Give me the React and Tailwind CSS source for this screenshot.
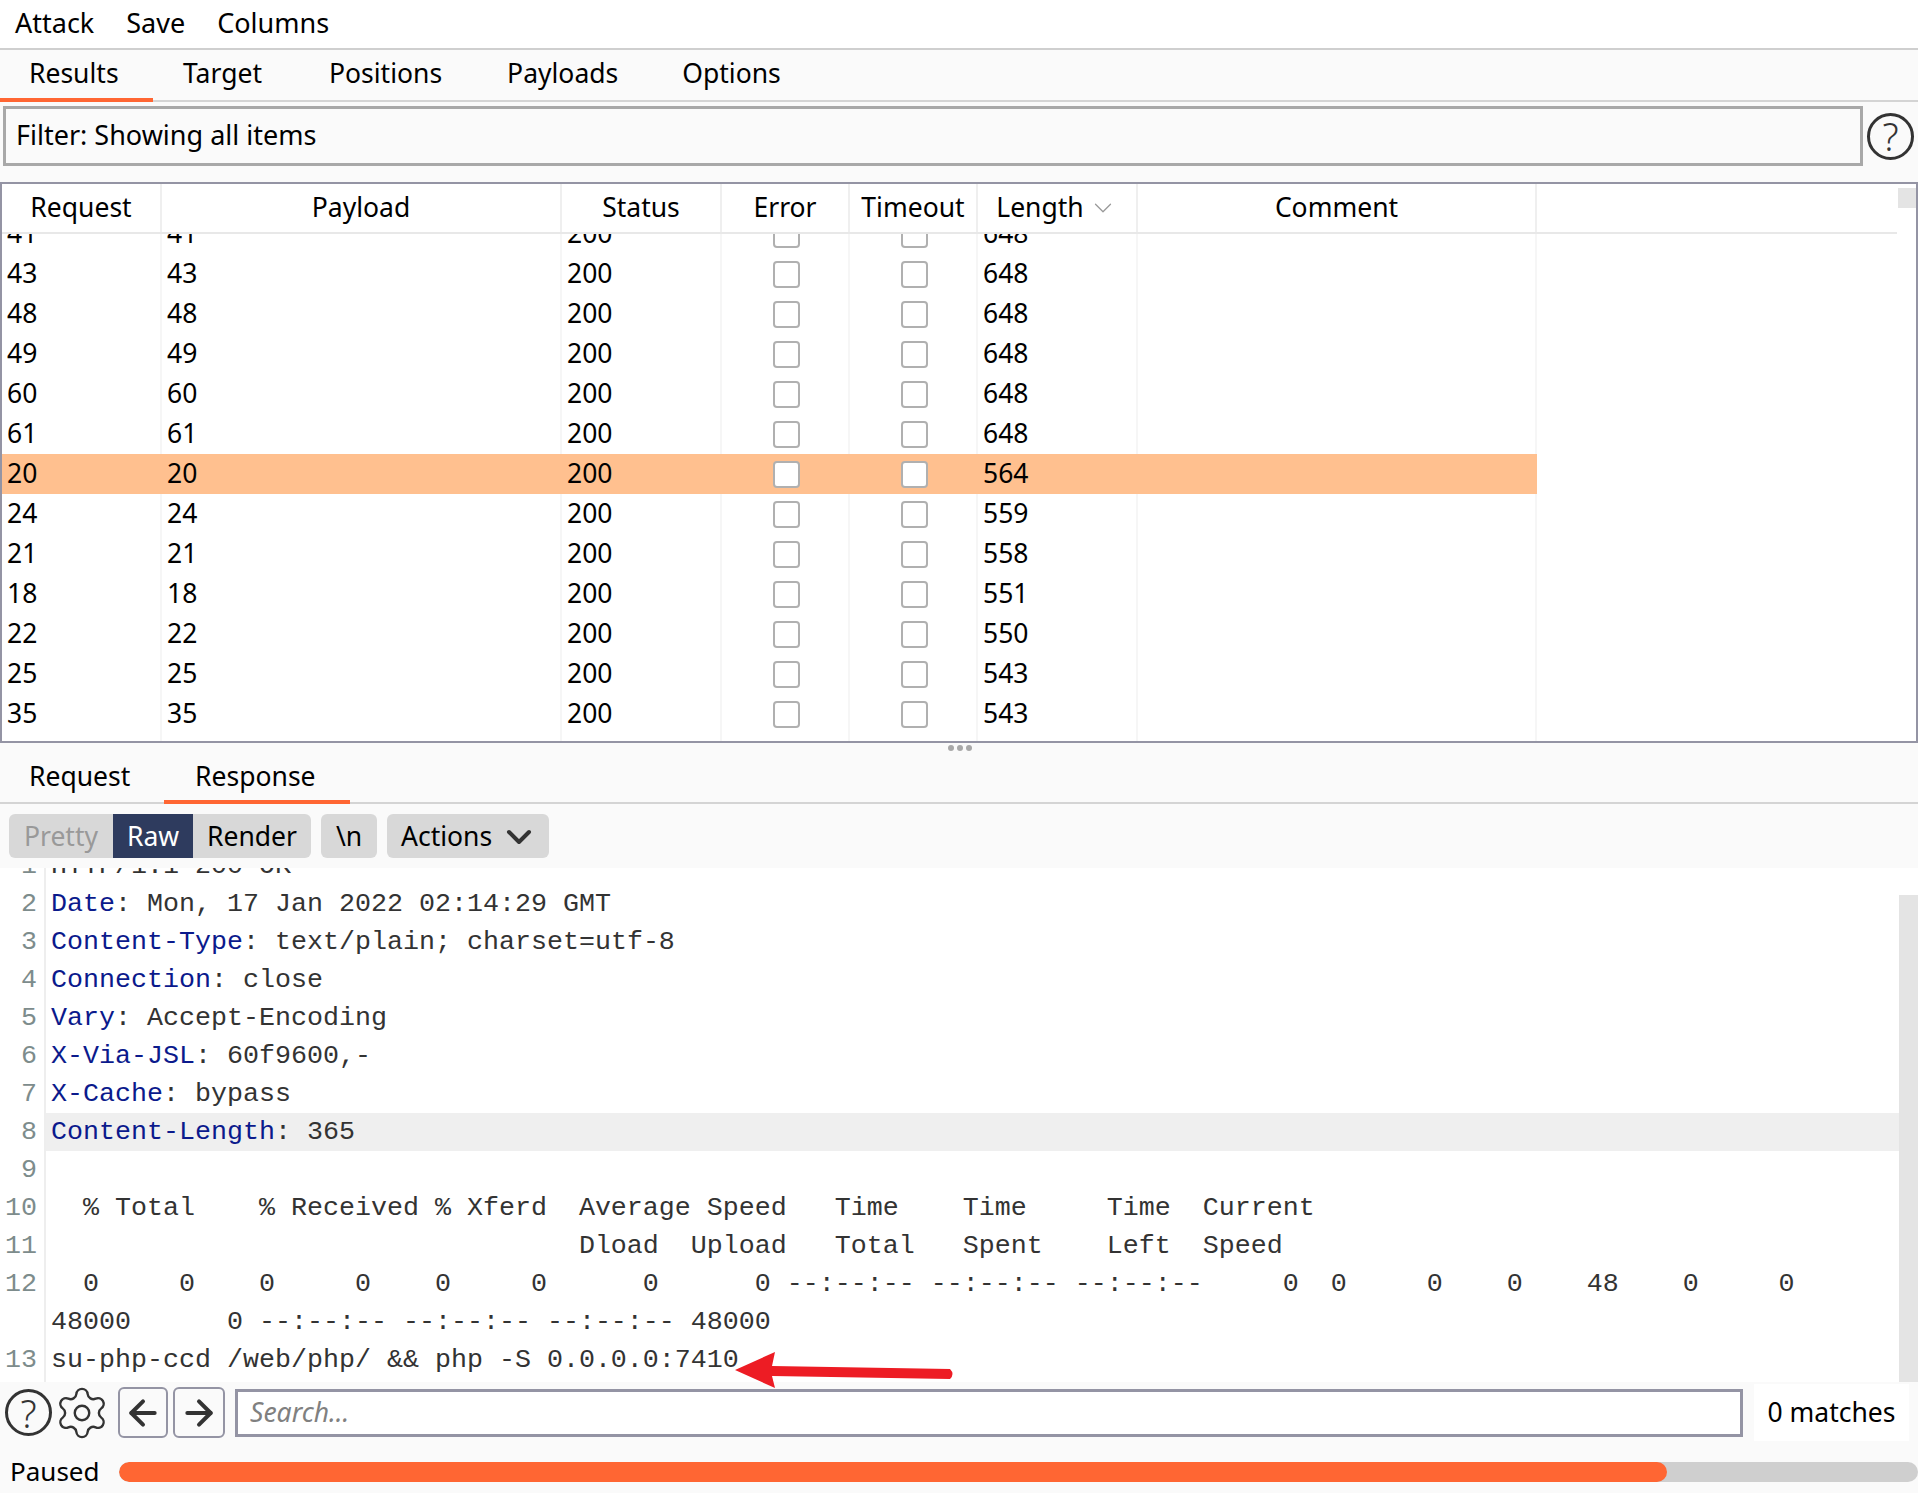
import { ArrowLeft, ArrowRight, ChevronDown, Settings } from 'lucide-react';

const columns = [
  { label: 'Request', width: 'w-[160px]' },
  { label: 'Payload', width: 'w-[400px]' },
  { label: 'Status', width: 'w-[160px]' },
  { label: 'Error', width: 'w-[128px]' },
  { label: 'Timeout', width: 'w-[128px]' },
  { label: 'Length', width: 'w-[160px]' },
  { label: 'Comment', width: 'w-[399px]' },
];

const rows = [
  ['41', '648'],
  ['43', '648'],
  ['48', '648'],
  ['49', '648'],
  ['60', '648'],
  ['61', '648'],
  ['20', '564'],
  ['24', '559'],
  ['21', '558'],
  ['18', '551'],
  ['22', '550'],
  ['25', '543'],
  ['35', '543'],
];

const lines = [
  { n: '1', text: 'HTTP/1.1 200 OK' },
  { n: '2', key: 'Date', text: ': Mon, 17 Jan 2022 02:14:29 GMT' },
  { n: '3', key: 'Content-Type', text: ': text/plain; charset=utf-8' },
  { n: '4', key: 'Connection', text: ': close' },
  { n: '5', key: 'Vary', text: ': Accept-Encoding' },
  { n: '6', key: 'X-Via-JSL', text: ': 60f9600,-' },
  { n: '7', key: 'X-Cache', text: ': bypass' },
  { n: '8', key: 'Content-Length', text: ': 365', active: true },
  { n: '9', text: '' },
  { n: '10', text: '  % Total    % Received % Xferd  Average Speed   Time    Time     Time  Current' },
  { n: '11', text: '                                 Dload  Upload   Total   Spent    Left  Speed' },
  { n: '12', text: '  0     0    0     0    0     0      0      0 --:--:-- --:--:-- --:--:--     0  0     0    0    48    0     0' },
  { n: '', text: '48000      0 --:--:-- --:--:-- --:--:-- 48000' },
  { n: '13', text: 'su-php-ccd /web/php/ && php -S 0.0.0.0:7410' },
];

function HelpIcon({ className }) {
  return (
    <div className={`flex items-center justify-center rounded-full border-[3px] border-[#333] text-[38px] font-light leading-none text-[#333] ${className}`}>
      ?
    </div>
  );
}

function Checkbox() {
  return <div className="h-[27px] w-[27px] rounded-[4px] border-2 border-[#b0b0b0] bg-white" />;
}

function ResultRow({ id, length }) {
  const selected = id === '20';
  const cell = selected ? 'border-[#ffc08f]' : 'border-[#f6f6f6]';
  return (
    <div className={`flex h-10 w-[1535px] shrink-0 items-center ${selected ? 'bg-[#ffc08f]' : ''}`}>
      <div className={`h-full w-[160px] border-r-2 pl-[5px] leading-[38px] ${cell}`}>{id}</div>
      <div className={`h-full w-[400px] border-r-2 pl-[5px] leading-[38px] ${cell}`}>{id}</div>
      <div className={`h-full w-[160px] border-r-2 pl-[5px] leading-[38px] ${cell}`}>200</div>
      <div className={`flex h-full w-[128px] items-center justify-center border-r-2 pl-[2px] ${cell}`}><Checkbox /></div>
      <div className={`flex h-full w-[128px] items-center justify-center border-r-2 pl-[2px] ${cell}`}><Checkbox /></div>
      <div className={`h-full w-[160px] border-r-2 pl-[5px] leading-[38px] ${cell}`}>{length}</div>
      <div className={`h-full w-[399px] border-r-2 ${cell}`} />
    </div>
  );
}

export default function App() {
  return (
    <div className="relative flex h-[1493px] w-[1918px] flex-col overflow-hidden bg-[#fafafa] font-['Noto_Sans',sans-serif] text-[26.5px] text-black">
      {/* menu */}
      <div className="flex h-[50px] shrink-0 items-center gap-[32px] border-b-2 border-[#cfcfcf] bg-white pb-[2px] pl-[15px] text-[27px]">
        <span>Attack</span>
        <span>Save</span>
        <span>Columns</span>
      </div>

      {/* tabs */}
      <div className="flex h-[52px] shrink-0 border-b-2 border-[#d4d4d4]">
        <div className="-mb-[2px] flex w-[153px] items-center border-b-4 border-[#ff6633] pl-[29px]">Results</div>
        <div className="ml-[30px] flex items-center pb-[2px]">Target</div>
        <div className="ml-[67px] flex items-center pb-[2px]">Positions</div>
        <div className="ml-[65px] flex items-center pb-[2px]">Payloads</div>
        <div className="ml-[64px] flex items-center pb-[2px]">Options</div>
      </div>

      {/* filter */}
      <div className="mt-[4px] flex h-[60px] shrink-0 items-center pl-[3px]">
        <div className="flex h-full w-[1860px] items-center border-[3px] border-[#a8a8a8] pb-[2px] pl-[10px] text-[27px]">Filter: Showing all items</div>
        <HelpIcon className="ml-[4px] h-[47px] w-[47px]" />
      </div>

      {/* results table */}
      <div className="mt-[16px] flex h-[561px] shrink-0 overflow-hidden border-2 border-[#9494a4] bg-white">
        <div className="flex w-[1895px] flex-col overflow-hidden">
          <div className="z-10 flex h-[50px] shrink-0 border-b-2 border-[#e8e8e8] bg-white">
            {columns.map((col) => (
              <div key={col.label} className={`flex h-full items-center justify-center border-r-2 border-[#efefef] ${col.width}`}>
                {col.label}
                {col.label === 'Length' && <ChevronDown size={30} strokeWidth={1} className="ml-[4px] text-[#999]" />}
              </div>
            ))}
          </div>
          <div className="-mt-[20px] flex flex-1 flex-col">
            {rows.map(([id, length]) => (
              <ResultRow key={id} id={id} length={length} />
            ))}
            <div className="flex flex-1">
              {columns.map((col) => (
                <div key={col.label} className={`h-full border-r-2 border-[#f6f6f6] ${col.width}`} />
              ))}
            </div>
          </div>
        </div>
        <div className="ml-[1px] mt-[4px] h-[20px] w-[18px] bg-[#e4e4e4]" />
      </div>

      {/* splitter */}
      <div className="flex h-[12px] shrink-0 items-center justify-center gap-[3px] pb-[2px] pl-[2px]">
        <span className="h-[6px] w-[6px] rounded-full bg-[#a8a8a8]" />
        <span className="h-[6px] w-[6px] rounded-full bg-[#a8a8a8]" />
        <span className="h-[6px] w-[6px] rounded-full bg-[#a8a8a8]" />
      </div>

      {/* request / response tabs */}
      <div className="flex h-[49px] shrink-0 border-b-2 border-[#d4d4d4]">
        <div className="ml-[29px] flex items-center pb-[4px]">Request</div>
        <div className="-mb-[2px] ml-[34px] flex w-[186px] items-center justify-center border-b-4 border-[#ff6633] pb-[2px] pr-[4px]">Response</div>
      </div>

      {/* message toolbar */}
      <div className="flex h-[64px] shrink-0 items-center pl-[9px] pb-[10px] pt-[10px]">
        <div className="flex h-[44px] overflow-hidden rounded-[6px] bg-[#d8d8d8]">
          <div className="flex w-[104px] items-center justify-center pt-[1px] text-[#999]">Pretty</div>
          <div className="flex w-[80px] items-center justify-center bg-[#2e3b5e] pt-[1px] text-white">Raw</div>
          <div className="flex w-[118px] items-center justify-center pt-[1px]">Render</div>
        </div>
        <div className="ml-[10px] flex h-[44px] w-[56px] items-center justify-center rounded-[6px] bg-[#d8d8d8] pt-[1px]">\n</div>
        <div className="ml-[10px] flex h-[44px] w-[162px] items-center rounded-[6px] bg-[#d8d8d8] pl-[14px] pt-[1px]">
          Actions
          <ChevronDown size={40} strokeWidth={2.4} className="ml-[7px] text-[#333]" />
        </div>
      </div>

      {/* editor */}
      <div className="flex h-[514px] shrink-0 overflow-hidden bg-white">
        <div className="flex-1 overflow-hidden font-['Liberation_Mono',monospace] text-[26.67px] leading-[38px]">
          <div className="-mt-[21px]">
            {lines.map((line, i) => (
              <div key={i} className={`flex h-[38px] ${line.active ? 'bg-[#efefef]' : ''}`}>
                <div className="h-full w-[46px] shrink-0 whitespace-pre border-r-2 border-[#eeeeee] bg-white pr-[7px] text-right text-[#7d8c8c]">{line.n}</div>
                <div className="whitespace-pre pl-[5px] text-[#333]">
                  {line.key && <span className="text-[#0b1a8c]">{line.key}</span>}
                  {line.text}
                </div>
              </div>
            ))}
            <div className="h-[30px] w-[46px] border-r-2 border-[#eeeeee]" />
          </div>
        </div>
        <div className="mt-[27px] w-[19px] bg-[#e4e4e4]" />
      </div>

      {/* search bar */}
      <div className="flex h-[58px] shrink-0 items-center pt-[3px]">
        <HelpIcon className="ml-[5px] h-[47px] w-[47px]" />
        <Settings size={58} strokeWidth={1} className="ml-[1px] text-[#333]" />
        <div className="ml-[7px] flex h-[51px] w-[50px] items-center justify-center rounded-[6px] border-2 border-[#9494a4]">
          <ArrowLeft size={40} strokeWidth={2.4} className="text-[#333]" />
        </div>
        <div className="ml-[5px] flex h-[51px] w-[52px] items-center justify-center rounded-[6px] border-2 border-[#9494a4]">
          <ArrowRight size={40} strokeWidth={2.4} className="text-[#333]" />
        </div>
        <div className="ml-[10px] flex h-[48px] w-[1508px] items-center border-[3px] border-[#9494a4] bg-white pl-[12px] italic text-[#808080]">
          Search...
        </div>
        <div className="ml-[11px] flex h-[57px] w-[155px] items-center justify-center bg-white">0 matches</div>
      </div>

      {/* status */}
      <div className="flex h-[53px] shrink-0 items-center pt-[10px]">
        <span className="ml-[10px] w-[109px] text-[26px]">Paused</span>
        <div className="h-[20px] flex-1 overflow-hidden rounded-full bg-[#cfcfcf]">
          <div className="h-full w-[1548px] rounded-full bg-[#ff6633]" />
        </div>
      </div>

      {/* annotation arrow */}
      <svg className="absolute left-[730px] top-[1350px]" width="230" height="40" viewBox="0 0 230 40">
        <path d="M5 20 L45 2 L42 16 L220 19 Q225 24 220 29 L42 26 L45 38 Z" fill="#ed1c24" />
      </svg>
    </div>
  );
}
